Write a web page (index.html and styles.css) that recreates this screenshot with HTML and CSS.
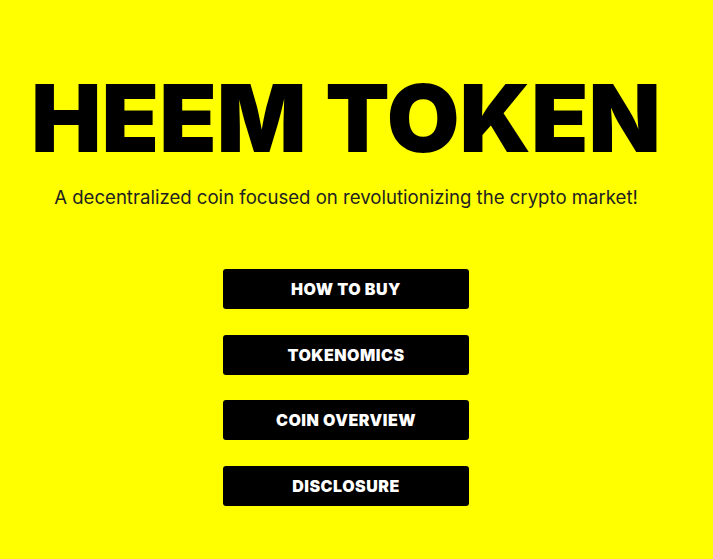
FILE: index.html
```html
<!DOCTYPE html>
<html lang="en">
<head>
<meta charset="utf-8">
<title>HEEM TOKEN</title>
<link rel="stylesheet" href="styles.css">
</head>
<body>
<main class="page">
  <h1 class="title">HEEM TOKEN</h1>
  <p class="tagline">A decentralized coin focused on revolutionizing the crypto market!</p>
  <nav class="menu">
    <a class="btn" href="#">HOW TO BUY</a>
    <a class="btn" href="#">TOKENOMICS</a>
    <a class="btn" href="#">COIN OVERVIEW</a>
    <a class="btn" href="#">DISCLOSURE</a>
  </nav>
</main>
</body>
</html>
```
FILE: styles.css
```css
html, body {
  margin: 0;
  padding: 0;
  background: #ffff00;
  height: 100%;
}
body {
  font-family: Inter, "Noto Sans", sans-serif;
  color: #000;
}
.page {
  width: 692px;
  display: flex;
  flex-direction: column;
  align-items: center;
  padding-top: 60px;
}
.title {
  margin: 0;
  font-size: 94px;
  font-weight: 900;
  line-height: 116px;
  letter-spacing: 0;
  color: #000;
}
.tagline {
  margin: 9px 0 0;
  font-size: 18.6px;
  line-height: 24px;
  font-weight: 400;
  color: #222;
}
.menu {
  margin-top: 60px;
  display: flex;
  flex-direction: column;
  gap: 25.7px;
}
.btn {
  display: flex;
  align-items: center;
  justify-content: center;
  width: 246px;
  height: 40px;
  background: #000;
  color: #fff;
  border-radius: 3px;
  text-decoration: none;
  font-size: 16px;
  font-weight: 900;
  letter-spacing: 0.5px;
}
```
